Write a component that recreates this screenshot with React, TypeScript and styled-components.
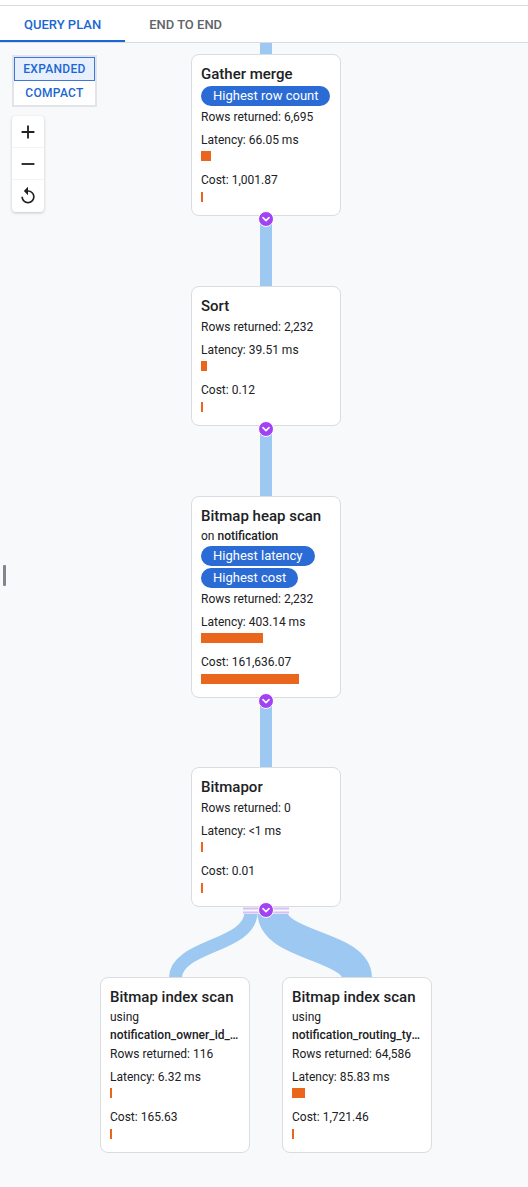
import React from 'react';
import styled, { createGlobalStyle } from 'styled-components';

const GlobalStyle = createGlobalStyle`
  html, body { margin: 0; padding: 0; background: #f8f9fa; }
  body { font-family: Roboto, "Liberation Sans", Arial, sans-serif; color: #202124; }
  * { box-sizing: border-box; }
`;

const BLUE_LINK = '#9cc8f1';
const ORANGE = '#ea661c';
const PURPLE = '#a142f4';
const ACCENT = '#1a67d2';

const Page = styled.div`
  width: 528px;
  height: 1187px;
  overflow: hidden;
  background: #f8f9fa;
  display: flex;
  flex-direction: column;
`;

const TopStrip = styled.div`
  height: 6px;
  background: #fff;
  border-bottom: 1px solid #dadce0;
  flex: none;
`;

const TabBar = styled.div`
  height: 37px;
  background: #fff;
  border-bottom: 1px solid #dadce0;
  display: flex;
  flex: none;
`;

const Tab = styled.div<{ $active?: boolean }>`
  display: flex;
  align-items: center;
  justify-content: center;
  padding: 1px 24px 0;
  font-size: 13px;
  font-weight: 500;
  color: ${p => (p.$active ? ACCENT : '#5f6368')};
  box-shadow: ${p => (p.$active ? `inset 0 -2px 0 ${ACCENT}` : 'none')};
`;

const Canvas = styled.div`
  flex: 1;
  position: relative;
`;

const Tree = styled.div`
  margin-left: 100px;
  width: 332px;
  display: flex;
  flex-direction: column;
  align-items: center;
`;

const Stub = styled.div`
  width: 12px;
  height: 11px;
  background: ${BLUE_LINK};
`;

const Link = styled.div<{ $h: number }>`
  width: 12px;
  height: ${p => p.$h}px;
  background: ${BLUE_LINK};
  position: relative;
`;

const Expander = styled.span<{ $top: number }>`
  position: absolute;
  left: 50%;
  top: ${p => p.$top}px;
  transform: translateX(-50%);
  width: 16px;
  height: 16px;
  border-radius: 50%;
  background: ${PURPLE};
  border: 1.5px solid #fff;
  display: flex;
  align-items: center;
  justify-content: center;
  z-index: 2;
`;

const Card = styled.div`
  width: 150px;
  background: #fff;
  border: 1px solid #dadce0;
  border-radius: 8px;
  padding: 9px 9px 13px;
  display: flex;
  flex-direction: column;
  gap: 2px;
  position: relative;
  z-index: 1;
`;

const Title = styled.div`
  font-size: 15px;
  line-height: 20px;
  font-weight: 500;
  color: #202124;
  white-space: nowrap;
`;

const Line = styled.div<{ $lh?: number }>`
  font-size: 12px;
  line-height: ${p => p.$lh ?? 18}px;
  color: #202124;
  white-space: nowrap;
  overflow: hidden;
  text-overflow: ellipsis;
`;

const Target = styled.span`
  font-weight: 500;
`;

const TargetLine = styled(Line)`
  font-weight: 500;
`;

const Badge = styled.div`
  align-self: flex-start;
  height: 20px;
  line-height: 20px;
  padding: 0 12px;
  border-radius: 10px;
  background: #2a6bd5;
  color: #fff;
  font-size: 13px;
  white-space: nowrap;
`;

const Metric = styled.div<{ $top: number; $barGap: number }>`
  margin-top: ${p => p.$top}px;
  display: flex;
  flex-direction: column;
  gap: ${p => p.$barGap}px;
`;

const Bar = styled.div`
  height: 10px;
  background: ${ORANGE};
`;

const Split = styled.div`
  width: 332px;
  height: 70px;
  position: relative;
`;

const SplitSvg = styled.svg`
  display: block;
`;

const Children = styled.div`
  display: flex;
  gap: 32px;
`;

const Controls = styled.div`
  position: absolute;
  left: 12px;
  top: 12px;
  display: flex;
  flex-direction: column;
  gap: 9px;
`;

const Toggle = styled.div`
  width: 85px;
  border: 2px solid #e2e4e7;
  background: #fff;
  display: flex;
  flex-direction: column;
`;

const ToggleButton = styled.div<{ $active?: boolean }>`
  height: 24px;
  display: flex;
  align-items: center;
  justify-content: center;
  font-size: 12px;
  font-weight: 500;
  letter-spacing: 0.3px;
  color: ${ACCENT};
  background: ${p => (p.$active ? '#e8f0fe' : '#fff')};
  border: 1px solid ${p => (p.$active ? '#3b78d8' : 'transparent')};
`;

const ZoomPanel = styled.div`
  width: 32px;
  background: #fff;
  border-radius: 4px;
  box-shadow: 0 1px 3px rgba(60, 64, 67, 0.28);
  display: flex;
  flex-direction: column;
`;

const ZoomButton = styled.div`
  height: 32px;
  display: flex;
  align-items: center;
  justify-content: center;
  border-bottom: 1px solid #f3f4f5;
  &:last-child { border-bottom: none; }
`;

const Handle = styled.div`
  position: absolute;
  left: 3px;
  top: 522px;
  width: 3px;
  height: 21px;
  background: #80868b;
  border-radius: 1px;
`;

const Chevron = () => (
  <svg width="10" height="10" viewBox="0 0 10 10">
    <path d="M2 3.6 L5 6.6 L8 3.6" fill="none" stroke="#fff" strokeWidth="1.6" strokeLinecap="round" strokeLinejoin="round" />
  </svg>
);

type NodeData = {
  title: string;
  prep?: string;
  target?: string;
  targetBlock?: boolean;
  badges?: string[];
  rows: string;
  latency: string;
  latW: number;
  cost: string;
  costW: number;
};

const PlanNode = ({ n }: { n: NodeData }) => (
  <Card>
    <Title>{n.title}</Title>
    {n.prep && !n.targetBlock && (
      <Line $lh={16}>
        {n.prep} <Target>{n.target}</Target>
      </Line>
    )}
    {n.prep && n.targetBlock && (
      <>
        <Line $lh={16}>{n.prep}</Line>
        <TargetLine $lh={16}>{n.target}</TargetLine>
      </>
    )}
    {n.badges?.map(b => (
      <Badge key={b}>{b}</Badge>
    ))}
    <Line>Rows returned: {n.rows}</Line>
    <Metric $top={3} $barGap={2}>
      <Line>Latency: {n.latency}</Line>
      <Bar style={{ width: n.latW }} />
    </Metric>
    <Metric $top={8} $barGap={3}>
      <Line>Cost: {n.cost}</Line>
      <Bar style={{ width: n.costW }} />
    </Metric>
  </Card>
);

const nodes: NodeData[] = [
  { title: 'Gather merge', badges: ['Highest row count'], rows: '6,695', latency: '66.05 ms', latW: 10, cost: '1,001.87', costW: 2 },
  { title: 'Sort', rows: '2,232', latency: '39.51 ms', latW: 6, cost: '0.12', costW: 2 },
  { title: 'Bitmap heap scan', prep: 'on', target: 'notification', badges: ['Highest latency', 'Highest cost'], rows: '2,232', latency: '403.14 ms', latW: 62, cost: '161,636.07', costW: 98 },
  { title: 'Bitmapor', rows: '0', latency: '<1 ms', latW: 2, cost: '0.01', costW: 2 },
];

const leaves: NodeData[] = [
  { title: 'Bitmap index scan', prep: 'using', target: 'notification_owner_id_idx', targetBlock: true, rows: '116', latency: '6.32 ms', latW: 2, cost: '165.63', costW: 2 },
  { title: 'Bitmap index scan', prep: 'using', target: 'notification_routing_type_idx', targetBlock: true, rows: '64,586', latency: '85.83 ms', latW: 13, cost: '1,721.46', costW: 2 },
];

const linkHeights = [70, 70, 69];

export default function App() {
  return (
    <>
      <GlobalStyle />
      <Page>
        <TopStrip />
        <TabBar>
          <Tab $active>QUERY PLAN</Tab>
          <Tab>END TO END</Tab>
        </TabBar>
        <Canvas>
          <Tree>
            <Stub />
            {nodes.map((n, i) => (
              <React.Fragment key={n.title}>
                <PlanNode n={n} />
                {i < nodes.length - 1 && (
                  <Link $h={linkHeights[i]}>
                    <Expander $top={-5}>
                      <Chevron />
                    </Expander>
                  </Link>
                )}
              </React.Fragment>
            ))}
            <Split>
              <SplitSvg width="332" height="70" viewBox="0 0 332 70">
                <path d="M151 5 C151 40 75.5 38 75.5 71" fill="none" stroke={BLUE_LINK} strokeWidth="13" />
                <path d="M172.5 5 C172.5 40 257 38 257 71" fill="none" stroke={BLUE_LINK} strokeWidth="30" />
                <rect x="143" y="0" width="46" height="7" fill="#f8f9fa" />
                <rect x="143" y="0.5" width="46" height="2" fill="#d9bff7" />
                <rect x="143" y="4.5" width="46" height="2" fill="#d9bff7" />
              </SplitSvg>
              <Expander $top={-5}>
                <Chevron />
              </Expander>
            </Split>
            <Children>
              {leaves.map(l => (
                <PlanNode key={l.target} n={l} />
              ))}
            </Children>
          </Tree>
          <Controls>
            <Toggle>
              <ToggleButton $active>EXPANDED</ToggleButton>
              <ToggleButton>COMPACT</ToggleButton>
            </Toggle>
            <ZoomPanel>
              <ZoomButton>
                <svg width="22" height="22" viewBox="0 0 24 24">
                  <path d="M19 13h-6v6h-2v-6H5v-2h6V5h2v6h6v2z" fill="#202124" />
                </svg>
              </ZoomButton>
              <ZoomButton>
                <svg width="22" height="22" viewBox="0 0 24 24">
                  <path d="M19 13H5v-2h14v2z" fill="#202124" />
                </svg>
              </ZoomButton>
              <ZoomButton>
                <svg width="20" height="20" viewBox="0 0 24 24">
                  <path d="M12 5V1L7 6l5 5V7c3.31 0 6 2.69 6 6s-2.69 6-6 6-6-2.69-6-6H4c0 4.42 3.58 8 8 8s8-3.58 8-8-3.58-8-8-8z" fill="#202124" />
                </svg>
              </ZoomButton>
            </ZoomPanel>
          </Controls>
          <Handle />
        </Canvas>
      </Page>
    </>
  );
}
